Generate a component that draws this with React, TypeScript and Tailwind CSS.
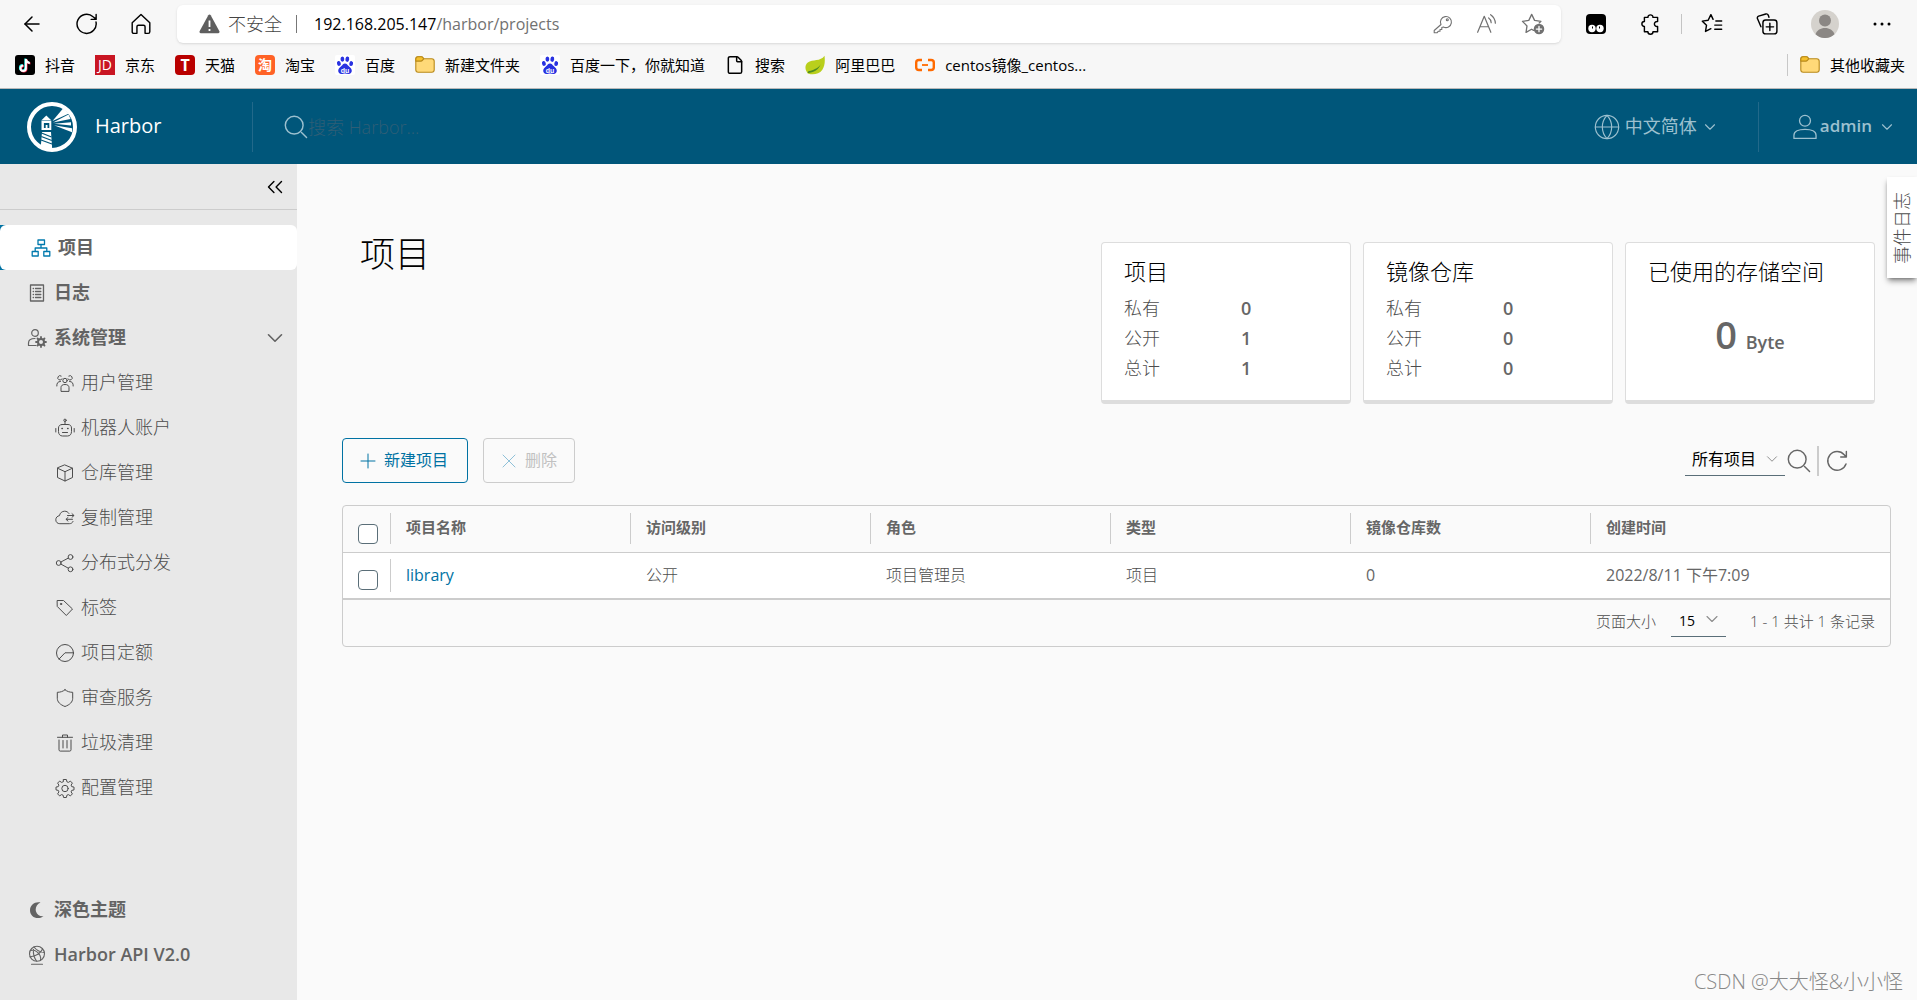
import type { ReactNode } from "react";
import {
  ArrowLeft,
  ChevronDown,
  ChevronsLeft,
  File,
  Globe,
  Plus,
  X,
} from "lucide-react";
import clsx from "clsx";

interface IconProps {
  size?: number;
  width?: number;
  className?: string;
  children: ReactNode;
}

const Icon = ({ size = 20, width = 1, className, children }: IconProps) => (
  <svg
    width={size}
    height={size}
    viewBox="0 0 20 20"
    fill="none"
    stroke="currentColor"
    strokeWidth={width}
    strokeLinecap="round"
    strokeLinejoin="round"
    className={clsx("shrink-0", className)}
    aria-hidden="true"
  >
    {children}
  </svg>
);

const SearchIcon = ({ size = 24 }: { size?: number }) => (
  <Icon size={size} width={1.2}>
    <circle cx="8.5" cy="8.5" r="7.4" />
    <path d="M14.6 14.6l4.2 4.2" />
  </Icon>
);

const FolderIcon = () => (
  <Icon width={1.1}>
    <path d="M.8 4.2c0-1.6.8-2.4 2.2-2.4h3.2c.9 0 1.5.5 2 1.2l.5.8h8c1.6 0 2.5.9 2.5 2.4v8.6c0 1.6-.9 2.4-2.4 2.4H3.2c-1.5 0-2.4-.9-2.4-2.4z" fill="#ffd978" stroke="#b8891a" />
    <path d="M.8 4.2c0-1.6.8-2.4 2.2-2.4h3.2c.9 0 1.5.5 2 1.2l.5.8-1.3 1.6c-.4.5-.8.7-1.5.7H.8z" fill="#f5c02c" stroke="#b8891a" />
  </Icon>
);

const BaiduIcon = () => (
  <svg width="20" height="20" viewBox="0 0 20 20" className="shrink-0" aria-hidden="true">
    <rect width="20" height="20" rx="2" fill="#fff" />
    <g fill="#2932e1">
      <ellipse cx="3.9" cy="8.4" rx="1.9" ry="2.5" transform="rotate(-15 3.9 8.4)" />
      <ellipse cx="7.4" cy="4.1" rx="1.9" ry="2.7" />
      <ellipse cx="12.3" cy="4.2" rx="1.9" ry="2.7" transform="rotate(8 12.3 4.2)" />
      <ellipse cx="16.2" cy="8.6" rx="1.9" ry="2.5" transform="rotate(12 16.2 8.6)" />
      <path d="M10 8.4c1.7 0 2.4 1.4 3.6 2.7 1.3 1.3 3.2 2.5 3.2 4.6 0 2-1.5 3.3-3.4 3.2-1.3 0-2.2-.5-3.4-.5s-2.1.5-3.4.5c-1.9.1-3.4-1.2-3.4-3.2 0-2.1 1.9-3.3 3.2-4.6C7.6 9.8 8.3 8.4 10 8.4z" />
    </g>
    <text x="10" y="17.5" textAnchor="middle" fontSize="7" fontWeight="700" fill="#fff" fontFamily="Liberation Sans, sans-serif">du</text>
  </svg>
);

const DouyinIcon = () => (
  <svg width="20" height="20" viewBox="0 0 20 20" className="shrink-0" aria-hidden="true">
    <rect width="20" height="20" rx="3" fill="#000" />
    <g fill="none" strokeWidth="2">
      <path d="M10.3 3.5v9.3a2.7 2.7 0 1 1-2.7-2.7M10.3 3.7c.3 2.2 1.6 3.5 3.9 3.7" stroke="#25f4ee" />
      <path d="M11.5 4.5v9.3a2.7 2.7 0 1 1-2.7-2.7M11.5 4.7c.3 2.2 1.6 3.5 3.9 3.7" stroke="#fe2c55" />
      <path d="M10.9 4v9.3a2.7 2.7 0 1 1-2.7-2.7M10.9 4.2c.3 2.2 1.6 3.5 3.9 3.7" stroke="#fff" />
    </g>
  </svg>
);

const AlibabaIcon = () => (
  <svg width="20" height="20" viewBox="0 0 20 20" className="shrink-0" aria-hidden="true">
    <path d="M19.5.8c.7 5.5.3 10.5-2.3 14.2-3 4.2-9 5-13.7 3.7C-.5 15.5-.4 9.6 2.8 7.4 7.5 4.2 15.5 6.8 19.5.8z" fill="#b9cf1c" />
    <path d="M2.5 18.2c6.5-.7 11.3-3.6 13.3-9.2-1.5 3.3-5.3 5.6-12.5 7.3z" fill="#4c8a22" />
  </svg>
);

const AliyunIcon = () => (
  <svg width="20" height="20" viewBox="0 0 20 20" fill="none" stroke="#ff6a00" strokeWidth="2.4" className="shrink-0" aria-hidden="true">
    <path d="M7 5H4C2 5 1.2 6 1.2 7.5v5C1.2 14 2 15 4 15h3M13 5h3c2 0 2.8 1 2.8 2.5v5c0 1.5-.8 2.5-2.8 2.5h-3" />
    <path d="M7 10h6" strokeWidth="1.8" />
  </svg>
);

interface BadgeProps {
  text: string;
  className: string;
}

const Badge = ({ text, className }: BadgeProps) => (
  <span className={clsx("flex size-5 shrink-0 items-center justify-center leading-none text-white", className)}>
    {text}
  </span>
);

const bookmarks = [
  { label: "抖音", icon: <DouyinIcon /> },
  { label: "京东", icon: <Badge text="JD" className="bg-[#c91623] text-sm" /> },
  { label: "天猫", icon: <Badge text="T" className="rounded-sm bg-[#b90000] text-base font-bold" /> },
  { label: "淘宝", icon: <Badge text="淘" className="rounded bg-[#ff6226] text-sm font-bold" /> },
  { label: "百度", icon: <BaiduIcon /> },
  { label: "新建文件夹", icon: <FolderIcon /> },
  { label: "百度一下，你就知道", icon: <BaiduIcon /> },
  { label: "搜索", icon: <File size={20} strokeWidth={1.5} absoluteStrokeWidth /> },
  { label: "阿里巴巴", icon: <AlibabaIcon /> },
  { label: "centos镜像_centos...", icon: <AliyunIcon /> },
];

const BrowserBar = () => (
  <div className="border-b border-[#b9b9b9] bg-[#f7f7f7] text-black">
    <div className="flex h-12 items-center">
      <div className="flex w-[177px] shrink-0 items-center gap-8 pl-5">
        <button aria-label="返回">
          <ArrowLeft size={24} strokeWidth={1.5} />
        </button>
        <button aria-label="刷新">
          <Icon size={22} width={1.3}>
            <path d="M18.2 8.2A8.7 8.7 0 1 1 15.5 3.4L18.3 5.6M18.3 1.3v4.5h-4.5" />
          </Icon>
        </button>
        <button aria-label="主页">
          <Icon size={22} width={1.3}>
            <path d="M2 8.8 10 1.3l8 7.5v8.2c0 .9-.6 1.5-1.5 1.5h-2.8V12.5c0-.9-.5-1.4-1.4-1.4H7.7c-.9 0-1.4.5-1.4 1.4v6H3.5c-.9 0-1.5-.6-1.5-1.5z" />
          </Icon>
        </button>
      </div>
      <div className="flex h-[38px] flex-1 items-center rounded-md bg-white pr-4 pl-[22px] shadow-sm">
        <svg width="21" height="20" viewBox="0 0 21 20" aria-hidden="true">
          <path d="M9.3 1.3a1.4 1.4 0 0 1 2.4 0l8.7 16a1.4 1.4 0 0 1-1.2 2H1.8a1.4 1.4 0 0 1-1.2-2z" fill="#5f5f5f" />
          <path d="M10.5 6.5v6.5M10.5 15v2" stroke="#fff" strokeWidth="1.8" />
        </svg>
        <span className="ml-2 text-lg font-light text-[#444]">不安全</span>
        <span className="mr-[17px] ml-3.5 h-[18px] w-px bg-[#777]" />
        <span className="text-base">192.168.205.147</span>
        <input
          type="text"
          aria-label="地址"
          defaultValue="/harbor/projects"
          className="flex-1 bg-transparent text-base text-[#717171] outline-none"
        />
        <div className="flex items-center gap-[23px] text-[#717171]">
          <Icon size={20} width={1.1}>
            <path d="M8 10.5A5.5 5.5 0 1 1 10.5 13l-1.7.6v1.9H7v1.8H5.2L4 18.8H1.2V16.5z" />
            <circle cx="14.3" cy="5.8" r="1" />
          </Icon>
          <Icon size={22} width={1.1}>
            <path d="M1.5 17.5 7.5 3l6 14.5M3.6 12.5h7.8M11.5 4.5c1.5 1 2.2 2.5 2.3 4.3M13.3 1.5c2.5 1.8 4.2 4.4 4.3 7.8" />
          </Icon>
          <Icon size={24} width={1.1}>
            <path d="M10.5 15.3 8.8 14.4 4.2 17l.8-5.4L1.2 7.8l5.3-.8L8.9 2l2.4 5 5.3.8-1.4 1.3" />
            <circle cx="15" cy="14.2" r="4.4" fill="#717171" stroke="none" />
            <path d="M15 12v4.4M12.8 14.2h4.4" stroke="#fff" />
          </Icon>
        </div>
      </div>
      <div className="flex items-center pl-[25px]">
        <svg width="20" height="20" viewBox="0 0 20 20" aria-hidden="true">
          <rect width="20" height="20" rx="4" />
          <circle cx="6" cy="14.5" r="3.7" fill="#fff" />
          <circle cx="14" cy="14.5" r="3.7" fill="#fff" />
          <path d="M6.5 12.5v2M13.5 12.5v2" stroke="#000" />
        </svg>
        <Icon size={22} width={1.3} className="ml-[34px]">
          <path d="M4 4h3.2a2.3 2.3 0 1 1 4.6 0H16v3.7h-.6a2.3 2.3 0 1 0 0 4.6h.6V17h-4.2a2.3 2.3 0 0 1-4.6 0H4v-4.7a2.3 2.3 0 1 1 0-4.6z" />
        </Icon>
        <span className="mx-[19px] h-5 w-px bg-[#c4c4c4]" />
        <Icon size={22} width={1.3}>
          <path d="M11 5.8 9 1.5 6.5 6.6l-5.3.8L5 11.2l-.9 5.6L9 14.3M13.5 7.3h5.3M12.5 11h6.3M12.5 14.7h6.3" />
        </Icon>
        <Icon size={22} width={1.3} className="ml-[33px]">
          <path d="M4.5 12.5 1.4 5.3c-.5-1 0-2 1-2.4l6.5-2c1-.3 1.8.1 2.2 1l.7 2" />
          <rect x="6.3" y="6.3" width="12.7" height="12.7" rx="2.5" />
          <path d="M12.6 9.3v6.7M9.3 12.6h6.7" />
        </Icon>
        <svg width="28" height="28" viewBox="0 0 28 28" className="ml-[33px]" aria-hidden="true">
          <circle cx="14" cy="14" r="14" fill="#d5d2cd" />
          <circle cx="14" cy="10.5" r="6" fill="#8b8784" />
          <path d="M4.5 24.3c1.5-4.2 5-6.3 9.5-6.3s8 2.1 9.5 6.3a14 14 0 0 1-19 0z" fill="#8b8784" />
        </svg>
        <svg width="18" height="4" viewBox="0 0 18 4" className="mr-[26px] ml-[34px]" aria-hidden="true">
          <circle cx="2" cy="2" r="1.5" />
          <circle cx="9" cy="2" r="1.5" />
          <circle cx="16" cy="2" r="1.5" />
        </svg>
      </div>
    </div>
    <div className="flex h-10 items-center gap-5 pr-3 pb-1.5 pl-[15px] text-[15px]">
      {bookmarks.map((item, i) => (
        <a key={i} href="#" className="flex items-center gap-2.5 whitespace-nowrap">
          {item.icon}
          {item.label}
        </a>
      ))}
      <a href="#" className="ml-auto flex items-center gap-2.5 whitespace-nowrap border-l border-[#c8c8c8] pl-3">
        <FolderIcon />
        其他收藏夹
      </a>
    </div>
  </div>
);

const HarborLogo = () => (
  <svg width="50" height="50" viewBox="0 0 50 50" aria-hidden="true">
    <circle cx="25" cy="25" r="23" fill="none" stroke="#fff" strokeWidth="4" />
    <g fill="#fff">
      <path d="M25.500 19 36 6.500l6 5z" />
      <path d="M26 20.5 41.500 12.500l2 4.500z" />
      <path d="M27 21.800l17-1.500v3.200z" />
      <path d="M27 23.300l18 3v4z" />
      <path d="M19.3 13.5 24.5 18.5H14.2z" />
      <path d="M14.5 19h9.8v9h-9.8z" />
      <path d="M15 30h9l1.2 17c-4.5.3-8-.5-11.4-2.5z" />
    </g>
    <path d="M17.8 26v-4h3.6v4" fill="none" stroke="#00567a" strokeWidth="1.8" />
    <path d="M14.5 31l10 4M14.3 34.5l10.5 4M14 38l11 4" stroke="#00567a" strokeWidth="1.3" />
  </svg>
);

const Header = () => (
  <header className="flex h-[75px] items-center bg-[#00567a] text-[#9cc0cf]">
    <a href="#" className="flex w-[252px] items-center gap-[18px] pl-[27px] text-xl text-white">
      <HarborLogo />
      <span className="pb-0.5">Harbor</span>
    </a>
    <div className="flex h-[50px] flex-1 items-center border-l border-[#22698a] pl-[31px]">
      <SearchIcon />
      <input
        type="search"
        aria-label="搜索"
        placeholder="搜索 Harbor..."
        className="flex-1 bg-transparent text-lg font-light text-white outline-none placeholder:text-[#2f5e76]"
      />
    </div>
    <button className="mr-[39px] flex items-center gap-1 text-lg">
      <Globe size={28} strokeWidth={1} />
      <span className="pb-0.5">中文简体</span>
      <ChevronDown size={18} strokeWidth={1.5} />
    </button>
    <button className="flex h-[50px] items-center gap-0.5 border-l border-[#22698a] pr-[21px] pl-[33px] text-[17px] font-semibold">
      <Icon size={26}>
        <circle cx="10" cy="5.2" r="4.2" />
        <path d="M1.5 18.8v-2.5C1.5 13.5 5 11.8 10 11.8s8.5 1.7 8.5 4.5v2.5z" />
      </Icon>
      <span className="pb-0.5">admin</span>
      <ChevronDown size={18} strokeWidth={1.5} className="ml-1" />
    </button>
  </header>
);

const gear =
  "M8.6 1.5h2.8l.5 2.3 1.5.6 2-1.3 2 2-1.3 2 .6 1.5 2.3.5v2.8l-2.3.5-.6 1.5 1.3 2-2 2-2-1.3-1.5.6-.5 2.3H8.6l-.5-2.3-1.5-.6-2 1.3-2-2 1.3-2-.6-1.5L1 11.9V9.1l2.3-.5.6-1.5-1.3-2 2-2 2 1.3 1.5-.6z";

const systemItems = [
  {
    label: "用户管理",
    icon: (
      <>
        <circle cx="10" cy="7.5" r="2.2" />
        <path d="M6 18v-3.5c0-2 1.5-3 4-3s4 1 4 3V18zM7 5.8A2.2 2.2 0 1 1 6.2 3M13 5.8A2.2 2.2 0 1 0 13.8 3M1.8 13c0-3 .8-4.3 3.7-4.6M18.2 13c0-3-.8-4.3-3.7-4.6" />
      </>
    ),
  },
  {
    label: "机器人账户",
    icon: (
      <>
        <path d="M7 6.5h6c2.2 0 3.5 1.5 3.5 3.5v3.5c0 2.7-1.5 4.5-4 4.5h-5c-2.5 0-4-1.8-4-4.5V10c0-2 1.3-3.5 3.5-3.5zM10 6.5V3.5M.8 10.5v3.5M19.2 10.5v3.5M7.5 14.5h5" />
        <circle cx="10" cy="2.3" r="1.2" />
        <path d="M7 10.5h.3M12.7 10.5h.3" strokeWidth="1.6" />
      </>
    ),
  },
  {
    label: "仓库管理",
    icon: <path d="M10 2l7.5 3.2v9.3L10 18l-7.5-3.5V5.2zM2.5 5.2 10 8.7l7.5-3.5M10 8.7V18" />,
  },
  {
    label: "复制管理",
    icon: (
      <>
        <path d="M14 5.5C13 4 11.5 3.2 9.7 3.2c-2.7 0-4.8 1.8-5.2 4.4C2.3 8 .8 9.6.8 11.8c0 2.3 1.7 3.9 4 3.9h9.5c1.8 0 3.2-.9 3.7-2.2" />
        <path d="M12.5 7.5h6.3M17 5.7l2 1.8-2 1.8M17.5 11.3h-6.3M13 9.5l-2 1.8 2 1.8" />
      </>
    ),
  },
  {
    label: "分布式分发",
    icon: (
      <>
        <circle cx="3.7" cy="10" r="2.4" />
        <circle cx="15.5" cy="4" r="2.4" />
        <circle cx="15.5" cy="16.3" r="2.4" />
        <path d="M5.9 9l7.4-3.9M5.9 11.1l7.4 4.1" />
      </>
    ),
  },
  {
    label: "标签",
    icon: (
      <>
        <path d="M2.5 2.5h6l9 8.5-6.2 6.5-8.8-8.8z" />
        <circle cx="6" cy="6" r=".7" />
      </>
    ),
  },
  {
    label: "项目定额",
    icon: (
      <>
        <circle cx="10" cy="10" r="8.5" />
        <path d="M18.3 9.8H10l-6 6.3" />
      </>
    ),
  },
  {
    label: "审查服务",
    icon: <path d="M10 1.8c2.2 1.7 4.7 2.5 7.7 2.5v6c0 3.7-3 6.5-7.7 8.2-4.7-1.7-7.7-4.5-7.7-8.2v-6c3 0 5.5-.8 7.7-2.5z" />,
  },
  {
    label: "垃圾清理",
    icon: <path d="M2.5 4.3h15M7.5 4.3V2h5v2.3M4 7v9.8c0 .8.5 1.3 1.2 1.3h9.6c.7 0 1.2-.5 1.2-1.3V7M8 7.5v7.5M12 7.5v7.5" />,
  },
  {
    label: "配置管理",
    icon: (
      <>
        <path d={gear} />
        <circle cx="10" cy="10.5" r="3.2" />
      </>
    ),
  },
];

const Sidebar = () => (
  <nav className="flex w-[297px] shrink-0 flex-col bg-[#e8e8e8] text-lg text-[#636363]">
    <div className="flex h-[46px] items-center justify-end border-b border-[#ccc] pr-[9px]">
      <button aria-label="收起" className="text-black">
        <ChevronsLeft size={26} strokeWidth={1.3} />
      </button>
    </div>
    <div className="mt-[15px] rounded-r-xl bg-[#0072a3]">
      <a href="#" className="flex h-[45px] items-center gap-[7px] rounded-md bg-white pl-[31px] font-bold">
        <Icon width={1.3} className="text-[#0079ad]">
          <path d="M7 2h6.5v4.5H7zM1.2 13.5h6V18h-6zM12.8 13.5h6V18h-6zM10 6.5V10M4.2 13V10h11.6v3" />
        </Icon>
        <span className="pb-0.5">项目</span>
      </a>
    </div>
    <a href="#" className="flex h-[45px] items-center gap-[7px] pl-[27px] font-bold">
      <Icon width={1.3}>
        <path d="M3.5 2h13v16h-13z" />
        <path d="M6.2 5.5h.3M8.5 5.5h5.3M6.2 8.5h.3M8.5 8.5h5.3M6.2 11.5h.3M8.5 11.5h5.3M6.2 14.5h.3M8.5 14.5h5.3" />
      </Icon>
      <span className="pb-0.5">日志</span>
    </a>
    <button className="flex h-[45px] items-center gap-[7px] pr-[9px] pl-[27px] font-bold">
      <Icon width={1.2}>
        <circle cx="8" cy="5" r="3.3" />
        <path d="M9 17.5H1.5V15c0-2.8 2.5-4.5 6.5-4.5" />
        <circle cx="14" cy="14" r="3" strokeWidth="2" />
        <path d="M14 9v1.5M14 17.5V19M9 14h1.5M17.5 14H19M10.5 10.5l1 1M16.5 16.5l1 1M17.5 10.5l-1 1M11.5 16.5l-1 1" strokeWidth="1.8" />
      </Icon>
      <span className="pb-0.5">系统管理</span>
      <ChevronDown size={26} strokeWidth={1.5} className="ml-auto" />
    </button>
    {systemItems.map((item) => (
      <a key={item.label} href="#" className="flex h-[45px] items-center gap-1.5 pl-[55px] font-light text-[#4d4d4d]">
        <Icon>{item.icon}</Icon>
        <span className="pb-0.5">{item.label}</span>
      </a>
    ))}
    <div className="mt-auto pb-[23px] font-bold">
      <button className="flex h-[45px] items-center gap-[7px] pl-[27px]">
        <Icon>
          <path d="M13.5 2.5C9.5 4.5 8 8 9 11.5s4 5.2 7.5 4.8C10.5 20.5 3 17 3 10.2 3 5 8 1.3 13.5 2.5z" fill="currentColor" stroke="none" />
        </Icon>
        <span className="pb-0.5">深色主题</span>
      </button>
      <a href="#" className="flex h-[45px] items-center gap-[7px] pl-[27px] font-semibold">
        <Icon width={1.1}>
          <circle cx="10" cy="8.8" r="7.5" />
          <path d="M4.5 19.2h11M3.5 5.5c4-1 7.5 1.5 9.5 5 .8 1.6 1 3 .5 5M15.5 4C14 8 9 11.5 3 11.7M7 2c2.5 3.5 5.5 5 10.3 5.5M6.5 4.5c-.5 4 .5 8 3 11.5" />
        </Icon>
        <span className="pb-0.5">Harbor API V2.0</span>
      </a>
    </div>
  </nav>
);

interface StatCardProps {
  title: string;
  children: ReactNode;
}

const StatCard = ({ title, children }: StatCardProps) => (
  <section className="h-[162px] w-[250px] rounded border border-b-4 border-[#ddd] bg-white px-[22px] pt-3">
    <h2 className="text-[22px] leading-8 font-light text-black">{title}</h2>
    {children}
  </section>
);

const CountList = ({ counts }: { counts: number[] }) => (
  <dl className="grid grid-cols-[117px_1fr] pt-1.5 text-lg leading-[30px]">
    {["私有", "公开", "总计"].map((name, i) => (
      <div key={name} className="contents">
        <dt className="font-light text-[#4d4d4d]">{name}</dt>
        <dd className="font-semibold">{counts[i]}</dd>
      </div>
    ))}
  </dl>
);

const columns = ["项目名称", "访问级别", "角色", "类型", "镜像仓库数", "创建时间"];
const projects = [
  { name: "library", access: "公开", role: "项目管理员", type: "项目", repos: 0, created: "2022/8/11 下午7:09" },
];

const Check = ({ label }: { label: string }) => (
  <input
    type="checkbox"
    aria-label={label}
    className="mt-2.5 ml-[15px] block size-5 appearance-none rounded border border-[#5a6e78] bg-white"
  />
);

const ProjectTable = () => (
  <div className="mt-[22px] rounded border border-[#ccc]">
    <table className="w-full table-fixed text-left">
      <colgroup>
        <col className="w-[47px]" />
        <col className="w-[240px]" />
        <col className="w-[240px]" />
        <col className="w-[240px]" />
        <col className="w-[240px]" />
        <col className="w-[240px]" />
        <col />
      </colgroup>
      <thead>
        <tr className="h-[46px] border-b border-[#ccc] text-[15px] font-bold">
          <th>
            <Check label="全选" />
          </th>
          {columns.map((name) => (
            <th key={name}>
              <div className="flex h-[31px] items-center border-l border-[#ccc] pb-[3px] pl-[15px]">{name}</div>
            </th>
          ))}
        </tr>
      </thead>
      <tbody>
        {projects.map((row) => (
          <tr key={row.name} className="h-[47px] border-b-2 border-[#ccc] bg-white text-base font-light text-[#4d4d4d]">
            <td>
              <Check label={row.name} />
            </td>
            <td>
              <div className="flex h-[33px] items-center border-l border-[#ccc] pl-[15px]">
                <a href="#" className="font-normal text-[#0072a3]">{row.name}</a>
              </div>
            </td>
            <td className="pl-4">{row.access}</td>
            <td className="pl-4">{row.role}</td>
            <td className="pl-4">{row.type}</td>
            <td className="pl-4 font-normal text-[#666]">{row.repos}</td>
            <td className="pl-4 font-normal text-[#666]">{row.created}</td>
          </tr>
        ))}
      </tbody>
    </table>
    <div className="flex h-[46px] items-center justify-end pr-[15px] pb-1 text-[15px] font-light text-[#4d4d4d]">
      <label htmlFor="page-size">页面大小</label>
      <div className="relative mr-6 ml-[15px]">
        <select id="page-size" className="h-8 w-[55px] appearance-none border-b border-[#5a6e78] pl-2 text-sm font-normal text-black">
          <option>15</option>
        </select>
        <ChevronDown size={20} strokeWidth={1.3} className="pointer-events-none absolute top-1 right-1 text-[#8c8c8c]" />
      </div>
      1 - 1 共计 1 条记录
    </div>
  </div>
);

const App = () => (
  <div className="relative flex min-h-screen flex-col font-['Open_Sans','Noto_Sans_CJK_SC',sans-serif]">
    <BrowserBar />
    <Header />
    <div className="flex flex-1">
      <Sidebar />
      <main className="relative flex-1 bg-[#fafafa] pr-[26px] pl-[45px] text-[#666]">
        <div className="flex items-start justify-between pt-[78px] pr-4 pl-[18px]">
          <h1 className="-mt-2 text-[35px] leading-10 font-light text-black">项目</h1>
          <div className="flex gap-3">
            <StatCard title="项目">
              <CountList counts={[0, 1, 1]} />
            </StatCard>
            <StatCard title="镜像仓库">
              <CountList counts={[0, 0, 0]} />
            </StatCard>
            <StatCard title="已使用的存储空间">
              <p className="pt-[23px] text-center text-lg font-semibold">
                <span className="mr-1 text-[38px] leading-[48px]">0</span> Byte
              </p>
            </StatCard>
          </div>
        </div>
        <div className="mt-[34px] flex items-center justify-between">
          <div className="flex gap-[15px] text-base">
            <button className="flex h-[45px] items-center gap-1 rounded border border-[#0072a3] pr-[19px] pl-[13px] text-[#0072a3]">
              <Plus size={24} strokeWidth={1} />
              <span className="pb-0.5">新建项目</span>
            </button>
            <button disabled className="flex h-[45px] items-center gap-1 rounded border border-[#ccc] pr-[17px] pl-[13px] text-[#c1c1c1]">
              <X size={24} strokeWidth={1} className="text-[#8fc1d8]" />
              <span className="pb-0.5">删除</span>
            </button>
          </div>
          <div className="flex items-center pr-[42px]">
            <div className="relative">
              <select aria-label="项目筛选" className="h-[30px] w-[100px] appearance-none border-b border-[#5a6e78] pb-0.5 pl-[7px] text-base text-black">
                <option>所有项目</option>
              </select>
              <ChevronDown size={18} strokeWidth={1.3} className="pointer-events-none absolute top-1 right-1 text-[#8c8c8c]" />
            </div>
            <button aria-label="搜索" className="ml-0.5">
              <SearchIcon />
            </button>
            <span className="mx-1.5 h-[30px] w-0.5 bg-[#ccc]" />
            <button aria-label="刷新">
              <Icon size={24} width={1.2}>
                <path d="M17.5 12.5A7.8 7.8 0 1 1 16 4.8L17.5 6.5M17.8 2v4.7h-4.7" />
              </Icon>
            </button>
          </div>
        </div>
        <ProjectTable />
        <button className="absolute top-[13px] right-0 flex h-[101px] w-[30px] items-center justify-center bg-white text-lg font-light text-[#4d4d4d] shadow-md shadow-black/40">
          <span className="rotate-180 [text-orientation:sideways] [writing-mode:vertical-rl]">事件日志</span>
        </button>
      </main>
    </div>
    <p className="absolute right-[14px] bottom-1 text-xl font-light text-[#888]">CSDN @大大怪&amp;小小怪</p>
  </div>
);

export default App;
